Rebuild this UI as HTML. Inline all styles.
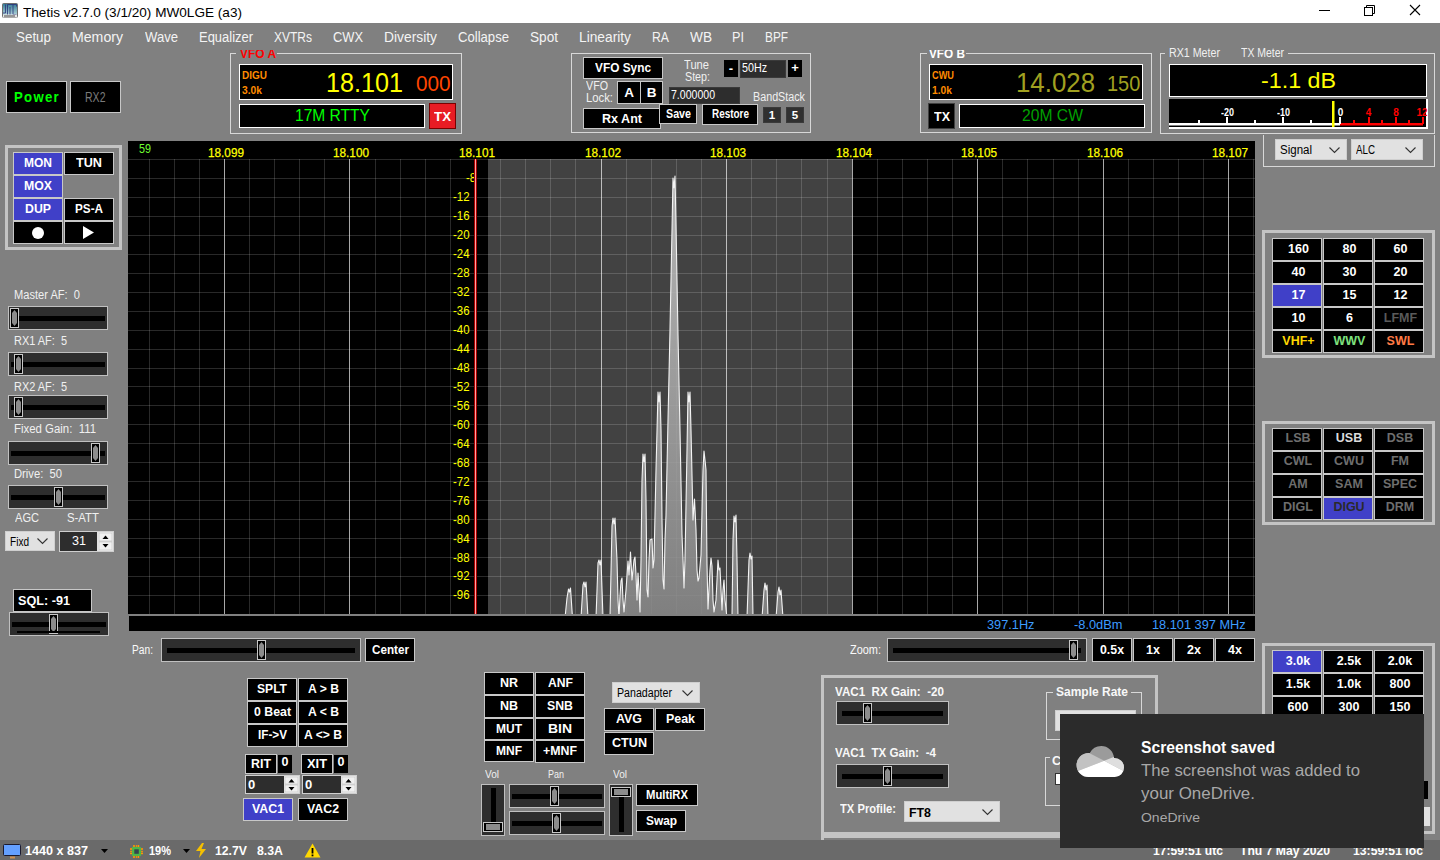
<!DOCTYPE html>
<html><head><meta charset="utf-8"><style>
html,body{margin:0;padding:0;}
body{width:1440px;height:860px;overflow:hidden;position:relative;background:#808080;font-family:"Liberation Sans",sans-serif;}
.a{position:absolute;}
.t{position:absolute;white-space:pre;}
svg{display:block;}
</style></head><body>
<div class="a" style="left:0px;top:0px;width:1440px;height:23px;background:#ffffff;"></div>
<svg class="a" style="left:2px;top:3px" width="16" height="15"><defs><linearGradient id="ig" x1="0" y1="0" x2="0" y2="1"><stop offset="0" stop-color="#2f7891"/><stop offset="1" stop-color="#cfe9ea"/></linearGradient></defs><rect x="0.5" y="0.5" width="15" height="14" rx="1" fill="url(#ig)" stroke="#6e6e6e"/><path d="M3.5 1.5v8.5h-2.5M5.5 1.5h9v2M8 4v9M11 1.5v10h3.5M5.5 1.5v12h-4.5" stroke="#2a2f7a" stroke-width="1" fill="none" opacity="0.8"/><rect x="1" y="11.5" width="14" height="3" fill="#e8e8e8"/><rect x="2" y="12.5" width="11" height="1" fill="#444"/></svg>
<div class="t" style="left:23.00px;top:6.00px;font-size:13px;line-height:13px;color:#000;font-weight:normal;transform:scaleX(1.0452);transform-origin:0 0;">Thetis v2.7.0 (3/1/20) MW0LGE (a3)</div>
<svg class="a" style="left:1310px;top:0px" width="130" height="23"><line x1="9" y1="10.5" x2="20" y2="10.5" stroke="#000" stroke-width="1"/><rect x="54.5" y="7.5" width="8" height="8" fill="none" stroke="#000"/><path d="M56.5 7.5V5.5h8v8h-2" fill="none" stroke="#000"/><path d="M100 5l10 10M110 5l-10 10" stroke="#000" stroke-width="1.1"/></svg>
<div class="t" style="left:16.00px;top:29.65px;font-size:14px;line-height:14px;color:#f4f4f4;font-weight:normal;transform:scaleX(0.9566);transform-origin:0 0;">Setup</div>
<div class="t" style="left:72.00px;top:29.65px;font-size:14px;line-height:14px;color:#f4f4f4;font-weight:normal;transform:scaleX(1.0087);transform-origin:0 0;">Memory</div>
<div class="t" style="left:145.00px;top:29.65px;font-size:14px;line-height:14px;color:#f4f4f4;font-weight:normal;transform:scaleX(0.9357);transform-origin:0 0;">Wave</div>
<div class="t" style="left:199.00px;top:29.65px;font-size:14px;line-height:14px;color:#f4f4f4;font-weight:normal;transform:scaleX(0.9252);transform-origin:0 0;">Equalizer</div>
<div class="t" style="left:274.00px;top:29.65px;font-size:14px;line-height:14px;color:#f4f4f4;font-weight:normal;transform:scaleX(0.8570);transform-origin:0 0;">XVTRs</div>
<div class="t" style="left:333.00px;top:29.65px;font-size:14px;line-height:14px;color:#f4f4f4;font-weight:normal;transform:scaleX(0.9185);transform-origin:0 0;">CWX</div>
<div class="t" style="left:384.00px;top:29.65px;font-size:14px;line-height:14px;color:#f4f4f4;font-weight:normal;transform:scaleX(0.9875);transform-origin:0 0;">Diversity</div>
<div class="t" style="left:458.00px;top:29.65px;font-size:14px;line-height:14px;color:#f4f4f4;font-weight:normal;transform:scaleX(0.9362);transform-origin:0 0;">Collapse</div>
<div class="t" style="left:530.00px;top:29.65px;font-size:14px;line-height:14px;color:#f4f4f4;font-weight:normal;transform:scaleX(0.9722);transform-origin:0 0;">Spot</div>
<div class="t" style="left:579.00px;top:29.65px;font-size:14px;line-height:14px;color:#f4f4f4;font-weight:normal;transform:scaleX(0.9826);transform-origin:0 0;">Linearity</div>
<div class="t" style="left:652.00px;top:29.65px;font-size:14px;line-height:14px;color:#f4f4f4;font-weight:normal;transform:scaleX(0.8741);transform-origin:0 0;">RA</div>
<div class="t" style="left:690.00px;top:29.65px;font-size:14px;line-height:14px;color:#f4f4f4;font-weight:normal;transform:scaleX(0.9755);transform-origin:0 0;">WB</div>
<div class="t" style="left:732.00px;top:29.65px;font-size:14px;line-height:14px;color:#f4f4f4;font-weight:normal;transform:scaleX(0.9072);transform-origin:0 0;">PI</div>
<div class="t" style="left:765.00px;top:29.65px;font-size:14px;line-height:14px;color:#f4f4f4;font-weight:normal;transform:scaleX(0.8447);transform-origin:0 0;">BPF</div>
<div class="a" style="left:6px;top:81px;width:61px;height:32px;background:#000;border:1px solid #c8c8c8;box-sizing:border-box;"></div>
<div class="t" style="left:13.65px;top:89.38px;font-size:15.5px;line-height:15.5px;color:#00ff00;font-weight:bold;letter-spacing:1.5px;transform:scaleX(0.8512);transform-origin:0 0;">Power</div>
<div class="a" style="left:70px;top:81px;width:51px;height:32px;background:#000;border:1px solid #c8c8c8;box-sizing:border-box;"></div>
<div class="t" style="left:85.25px;top:89.98px;font-size:14.2px;line-height:14.2px;color:#7a7a7a;font-weight:normal;transform:scaleX(0.7421);transform-origin:0 0;">RX2</div>
<div class="a" style="left:230px;top:53px;width:232px;height:81px;border:1px solid #d8d8d8;box-sizing:border-box;"></div>
<div class="a" style="left:236px;top:48px;width:41px;height:10px;background:#808080;"></div>
<div class="t" style="left:239.50px;top:47.00px;font-size:13px;line-height:13px;color:#ff0000;font-weight:bold;transform:scaleX(0.9174);transform-origin:0 0;">VFO A</div>
<div class="a" style="left:236px;top:44px;width:45px;height:6px;background:#808080;"></div>
<div class="a" style="left:239px;top:64px;width:214px;height:36px;background:#000;border:1px solid #ffffff;box-sizing:border-box;"></div>
<div class="t" style="left:242.00px;top:69.61px;font-size:10.5px;line-height:10.5px;color:#ff8c00;font-weight:bold;transform:scaleX(0.9524);transform-origin:0 0;">DIGU</div>
<div class="t" style="left:242.00px;top:85.11px;font-size:10.5px;line-height:10.5px;color:#ff8c00;font-weight:bold;transform:scaleX(0.9786);transform-origin:0 0;">3.0k</div>
<div class="t" style="left:325.50px;top:68.72px;font-size:27.5px;line-height:27.5px;color:#ffff00;font-weight:normal;transform:scaleX(0.9154);transform-origin:0 0;">18.101</div>
<div class="t" style="left:416.00px;top:72.95px;font-size:22.5px;line-height:22.5px;color:#ff4500;font-weight:normal;transform:scaleX(0.9216);transform-origin:0 0;">000</div>
<div class="a" style="left:239px;top:104px;width:186px;height:24px;background:#000;border:1px solid #ffffff;box-sizing:border-box;"></div>
<div class="t" style="left:294.50px;top:107.96px;font-size:16px;line-height:16px;color:#00ff00;font-weight:normal;transform:scaleX(0.9733);transform-origin:0 0;">17M RTTY</div>
<div class="a" style="left:429px;top:103px;width:27px;height:26px;background:#e81c24;border:1px solid #7a0000;box-sizing:border-box;"></div>
<div class="a" style="left:430px;top:104px;width:25px;height:24px;background:#e81c24;"></div>
<div class="t" style="left:434.00px;top:110.00px;font-size:13px;line-height:13px;color:#fff;font-weight:bold;transform:scaleX(1.0233);transform-origin:0 0;">TX</div>
<div class="a" style="left:571px;top:53px;width:240px;height:80px;border:1px solid #d8d8d8;box-sizing:border-box;"></div>
<div class="a" style="left:583px;top:57px;width:80px;height:22px;background:#000;border:1px solid #c8c8c8;box-sizing:border-box;"></div>
<div class="t" style="left:595.00px;top:61.22px;font-size:13.5px;line-height:13.5px;color:#fff;font-weight:bold;transform:scaleX(0.8781);transform-origin:0 0;">VFO Sync</div>
<div class="t" style="left:586.00px;top:80.42px;font-size:12.5px;line-height:12.5px;color:#f0f0f0;font-weight:normal;transform:scaleX(0.8562);transform-origin:0 0;">VFO</div>
<div class="t" style="left:586.00px;top:92.42px;font-size:12.5px;line-height:12.5px;color:#f0f0f0;font-weight:normal;transform:scaleX(0.9037);transform-origin:0 0;">Lock:</div>
<div class="a" style="left:617px;top:81px;width:24px;height:23px;background:#000;border:1px solid #c8c8c8;box-sizing:border-box;"></div>
<div class="t" style="left:624.13px;top:85.72px;font-size:13.5px;line-height:13.5px;color:#fff;font-weight:bold;">A</div>
<div class="a" style="left:640px;top:81px;width:23px;height:23px;background:#000;border:1px solid #c8c8c8;box-sizing:border-box;"></div>
<div class="t" style="left:646.63px;top:85.72px;font-size:13.5px;line-height:13.5px;color:#fff;font-weight:bold;">B</div>
<div class="a" style="left:583px;top:108px;width:78px;height:21px;background:#000;border:1px solid #c8c8c8;box-sizing:border-box;"></div>
<div class="t" style="left:602.00px;top:111.72px;font-size:13.5px;line-height:13.5px;color:#fff;font-weight:bold;transform:scaleX(0.9302);transform-origin:0 0;">Rx Ant</div>
<div class="a" style="left:659px;top:104px;width:38px;height:20px;background:#000;border:1px solid #c8c8c8;box-sizing:border-box;"></div>
<div class="t" style="left:665.50px;top:107.97px;font-size:12px;line-height:12px;color:#fff;font-weight:bold;transform:scaleX(0.8920);transform-origin:0 0;">Save</div>
<div class="a" style="left:702px;top:104px;width:56px;height:21px;background:#000;border:1px solid #c8c8c8;box-sizing:border-box;"></div>
<div class="t" style="left:711.50px;top:108.47px;font-size:12px;line-height:12px;color:#fff;font-weight:bold;transform:scaleX(0.8280);transform-origin:0 0;">Restore</div>
<div class="t" style="left:684.00px;top:59.42px;font-size:12.5px;line-height:12.5px;color:#f0f0f0;font-weight:normal;transform:scaleX(0.8920);transform-origin:0 0;">Tune</div>
<div class="t" style="left:685.00px;top:71.42px;font-size:12.5px;line-height:12.5px;color:#f0f0f0;font-weight:normal;transform:scaleX(0.8565);transform-origin:0 0;">Step:</div>
<div class="a" style="left:724px;top:60px;width:14px;height:17px;background:#000;"></div>
<div class="t" style="left:728.84px;top:62.00px;font-size:13px;line-height:13px;color:#fff;font-weight:bold;">-</div>
<div class="a" style="left:740px;top:60px;width:46px;height:18px;background:#2d2d2d;border:1px solid #3a3a3a;box-sizing:border-box;"></div>
<div class="t" style="left:741.50px;top:62.42px;font-size:12.5px;line-height:12.5px;color:#fff;font-weight:normal;transform:scaleX(0.8567);transform-origin:0 0;">50Hz</div>
<div class="a" style="left:788px;top:60px;width:14px;height:17px;background:#000;"></div>
<div class="t" style="left:791.20px;top:61.00px;font-size:13px;line-height:13px;color:#fff;font-weight:bold;">+</div>
<div class="a" style="left:669px;top:87px;width:71px;height:17px;background:#2d2d2d;border:1px solid #3a3a3a;box-sizing:border-box;"></div>
<div class="t" style="left:671.00px;top:89.42px;font-size:12.5px;line-height:12.5px;color:#fff;font-weight:normal;transform:scaleX(0.8439);transform-origin:0 0;">7.000000</div>
<div class="t" style="left:753.00px;top:91.42px;font-size:12.5px;line-height:12.5px;color:#f0f0f0;font-weight:normal;transform:scaleX(0.8601);transform-origin:0 0;">BandStack</div>
<div class="a" style="left:763px;top:107px;width:18px;height:16px;background:#303030;border:1px solid #3a3a3a;box-sizing:border-box;"></div>
<div class="t" style="left:768.80px;top:109.77px;font-size:11.5px;line-height:11.5px;color:#fff;font-weight:bold;">1</div>
<div class="a" style="left:786px;top:107px;width:18px;height:16px;background:#303030;border:1px solid #3a3a3a;box-sizing:border-box;"></div>
<div class="t" style="left:791.80px;top:109.77px;font-size:11.5px;line-height:11.5px;color:#fff;font-weight:bold;">5</div>
<div class="a" style="left:920px;top:53px;width:232px;height:80px;border:1px solid #d8d8d8;box-sizing:border-box;"></div>
<div class="a" style="left:927px;top:48px;width:39px;height:10px;background:#808080;"></div>
<div class="t" style="left:929.00px;top:47.00px;font-size:13px;line-height:13px;color:#ffffff;font-weight:bold;transform:scaleX(0.9062);transform-origin:0 0;">VFO B</div>
<div class="a" style="left:926px;top:44px;width:45px;height:6px;background:#808080;"></div>
<div class="a" style="left:929px;top:64px;width:214px;height:36px;background:#000;border:1px solid #ffffff;box-sizing:border-box;"></div>
<div class="t" style="left:932.00px;top:69.61px;font-size:10.5px;line-height:10.5px;color:#ff8c00;font-weight:bold;transform:scaleX(0.8773);transform-origin:0 0;">CWU</div>
<div class="t" style="left:932.00px;top:85.11px;font-size:10.5px;line-height:10.5px;color:#ff8c00;font-weight:bold;transform:scaleX(0.9786);transform-origin:0 0;">1.0k</div>
<div class="t" style="left:1015.80px;top:68.72px;font-size:27.5px;line-height:27.5px;color:#a0a020;font-weight:normal;transform:scaleX(0.9392);transform-origin:0 0;">14.028</div>
<div class="t" style="left:1106.70px;top:72.95px;font-size:22.5px;line-height:22.5px;color:#a0a020;font-weight:normal;transform:scaleX(0.8870);transform-origin:0 0;">150</div>
<div class="a" style="left:928px;top:103px;width:27px;height:26px;background:#000;border:1px solid #404040;box-sizing:border-box;"></div>
<div class="t" style="left:933.50px;top:110.00px;font-size:13px;line-height:13px;color:#fff;font-weight:bold;transform:scaleX(0.9631);transform-origin:0 0;">TX</div>
<div class="a" style="left:959px;top:104px;width:186px;height:24px;background:#000;border:1px solid #ffffff;box-sizing:border-box;"></div>
<div class="t" style="left:1021.50px;top:107.96px;font-size:16px;line-height:16px;color:#00a000;font-weight:normal;transform:scaleX(0.9803);transform-origin:0 0;">20M CW</div>
<div class="a" style="left:1160px;top:53px;width:275px;height:81px;border:1px solid #d8d8d8;box-sizing:border-box;"></div>
<div class="a" style="left:1165px;top:47px;width:123px;height:10px;background:#808080;"></div>
<div class="t" style="left:1169.00px;top:47.42px;font-size:12.5px;line-height:12.5px;color:#f0f0f0;font-weight:normal;transform:scaleX(0.8537);transform-origin:0 0;">RX1 Meter</div>
<div class="t" style="left:1241.00px;top:47.42px;font-size:12.5px;line-height:12.5px;color:#f0f0f0;font-weight:normal;transform:scaleX(0.8366);transform-origin:0 0;">TX Meter</div>
<div class="a" style="left:1169px;top:64px;width:258px;height:33px;background:#000;border:1px solid #ffffff;box-sizing:border-box;"></div>
<div class="t" style="left:1260.50px;top:69.88px;font-size:22px;line-height:22px;color:#ffff00;font-weight:normal;transform:scaleX(1.0573);transform-origin:0 0;">-1.1 dB</div>
<div class="a" style="left:1169px;top:99px;width:259px;height:29px;background:#000;"></div>
<div class="a" style="left:1426px;top:99px;width:2px;height:29px;background:#fff"></div>
<div class="a" style="left:1169px;top:127px;width:259px;height:2px;background:#ffffff"></div>
<svg class="a" style="left:1169px;top:99px" width="259" height="29"><rect x="0" y="24" width="171" height="2.5" fill="#fff"/><rect x="171" y="24" width="83" height="2.5" fill="#ff0000"/><rect x="29" y="21" width="2" height="4" fill="#fff"/><rect x="85" y="21" width="2" height="4" fill="#fff"/><rect x="141" y="21" width="2" height="4" fill="#fff"/><rect x="57" y="18" width="2" height="7" fill="#fff"/><rect x="113" y="18" width="2" height="7" fill="#fff"/><rect x="170" y="18" width="2" height="7" fill="#fff"/><rect x="184" y="21" width="2" height="4" fill="#ff0000"/><rect x="212" y="21" width="2" height="4" fill="#ff0000"/><rect x="239" y="21" width="2" height="4" fill="#ff0000"/><rect x="199" y="18" width="2" height="7" fill="#ff0000"/><rect x="226" y="18" width="2" height="7" fill="#ff0000"/><rect x="253" y="18" width="2" height="7" fill="#ff0000"/><rect x="163" y="2" width="2.5" height="26" fill="#ffff00"/></svg>
<div class="t" style="left:1220.50px;top:107.53px;font-size:10px;line-height:10px;color:#fff;font-weight:bold;transform:scaleX(0.8994);transform-origin:0 0;">-20</div>
<div class="t" style="left:1276.50px;top:107.53px;font-size:10px;line-height:10px;color:#fff;font-weight:bold;transform:scaleX(0.8994);transform-origin:0 0;">-10</div>
<div class="t" style="left:1337.72px;top:107.53px;font-size:10px;line-height:10px;color:#fff;font-weight:bold;">0</div>
<div class="t" style="left:1365.72px;top:107.53px;font-size:10px;line-height:10px;color:#ff0000;font-weight:bold;">4</div>
<div class="t" style="left:1393.22px;top:107.53px;font-size:10px;line-height:10px;color:#ff0000;font-weight:bold;">8</div>
<div class="t" style="left:1416.44px;top:107.53px;font-size:10px;line-height:10px;color:#ff0000;font-weight:bold;">12</div>
<div class="a" style="left:5px;top:145px;width:117px;height:105px;border:3px solid #c4c4c4;box-sizing:border-box;"></div>
<div class="a" style="left:13px;top:152px;width:50px;height:23px;background:#4040c8;border:1px solid #c8c8c8;box-sizing:border-box;"></div>
<div class="t" style="left:24.00px;top:157.22px;font-size:12.5px;line-height:12.5px;color:#fff;font-weight:bold;transform:scaleX(0.9601);transform-origin:0 0;">MON</div>
<div class="a" style="left:64px;top:152px;width:50px;height:23px;background:#000;border:1px solid #c8c8c8;box-sizing:border-box;"></div>
<div class="t" style="left:76.00px;top:157.22px;font-size:12.5px;line-height:12.5px;color:#fff;font-weight:bold;transform:scaleX(1.0121);transform-origin:0 0;">TUN</div>
<div class="a" style="left:13px;top:175px;width:50px;height:23px;background:#4040c8;border:1px solid #c8c8c8;box-sizing:border-box;"></div>
<div class="t" style="left:24.00px;top:180.22px;font-size:12.5px;line-height:12.5px;color:#fff;font-weight:bold;transform:scaleX(0.9834);transform-origin:0 0;">MOX</div>
<div class="a" style="left:13px;top:198px;width:50px;height:23px;background:#4040c8;border:1px solid #c8c8c8;box-sizing:border-box;"></div>
<div class="t" style="left:25.00px;top:203.22px;font-size:12.5px;line-height:12.5px;color:#fff;font-weight:bold;transform:scaleX(0.9851);transform-origin:0 0;">DUP</div>
<div class="a" style="left:64px;top:198px;width:50px;height:23px;background:#000;border:1px solid #c8c8c8;box-sizing:border-box;"></div>
<div class="t" style="left:75.00px;top:203.22px;font-size:12.5px;line-height:12.5px;color:#fff;font-weight:bold;transform:scaleX(0.9375);transform-origin:0 0;">PS-A</div>
<div class="a" style="left:13px;top:221px;width:50px;height:23px;background:#000;border:1px solid #c8c8c8;box-sizing:border-box;"></div>
<div class="a" style="left:32px;top:227px;width:12px;height:12px;border-radius:50%;background:#fff"></div>
<div class="a" style="left:64px;top:221px;width:50px;height:23px;background:#000;border:1px solid #c8c8c8;box-sizing:border-box;"></div>
<svg class="a" style="left:83px;top:226px" width="11" height="13"><polygon points="0,0 11,6.5 0,13" fill="#fff"/></svg>
<div class="t" style="left:14.00px;top:288.84px;font-size:12px;line-height:12px;color:#f0f0f0;font-weight:normal;transform:scaleX(0.9249);transform-origin:0 0;">Master AF:  0</div>
<div class="a" style="left:8px;top:306px;width:100px;height:24px;background:#2e2e2e;border:1px solid #c0c0c0;box-sizing:border-box;"></div>
<div class="a" style="left:11px;top:316px;width:94px;height:5px;background:#000;"></div>
<div class="a" style="left:10px;top:308px;width:9px;height:20px;background:#000;border:1px solid #c8c8c8;box-sizing:border-box;"></div>
<svg class="a" style="left:12px;top:310px" width="5" height="16"><polygon points="2.5,0 5,3 5,13 2.5,16 0,13 0,3" fill="#8c8c8c"/></svg>
<div class="t" style="left:14.00px;top:334.84px;font-size:12px;line-height:12px;color:#f0f0f0;font-weight:normal;transform:scaleX(0.9134);transform-origin:0 0;">RX1 AF:  5</div>
<div class="a" style="left:8px;top:352px;width:100px;height:24px;background:#2e2e2e;border:1px solid #c0c0c0;box-sizing:border-box;"></div>
<div class="a" style="left:11px;top:362px;width:94px;height:5px;background:#000;"></div>
<div class="a" style="left:14px;top:354px;width:9px;height:20px;background:#000;border:1px solid #c8c8c8;box-sizing:border-box;"></div>
<svg class="a" style="left:16px;top:356px" width="5" height="16"><polygon points="2.5,0 5,3 5,13 2.5,16 0,13 0,3" fill="#8c8c8c"/></svg>
<div class="t" style="left:14.00px;top:380.84px;font-size:12px;line-height:12px;color:#f0f0f0;font-weight:normal;transform:scaleX(0.9134);transform-origin:0 0;">RX2 AF:  5</div>
<div class="a" style="left:8px;top:395px;width:100px;height:24px;background:#2e2e2e;border:1px solid #c0c0c0;box-sizing:border-box;"></div>
<div class="a" style="left:11px;top:405px;width:94px;height:5px;background:#000;"></div>
<div class="a" style="left:14px;top:397px;width:9px;height:20px;background:#000;border:1px solid #c8c8c8;box-sizing:border-box;"></div>
<svg class="a" style="left:16px;top:399px" width="5" height="16"><polygon points="2.5,0 5,3 5,13 2.5,16 0,13 0,3" fill="#8c8c8c"/></svg>
<div class="t" style="left:14.00px;top:423.34px;font-size:12px;line-height:12px;color:#f0f0f0;font-weight:normal;transform:scaleX(0.9505);transform-origin:0 0;">Fixed Gain:  111</div>
<div class="a" style="left:8px;top:441px;width:100px;height:24px;background:#2e2e2e;border:1px solid #c0c0c0;box-sizing:border-box;"></div>
<div class="a" style="left:11px;top:451px;width:94px;height:5px;background:#000;"></div>
<div class="a" style="left:91px;top:443px;width:9px;height:20px;background:#000;border:1px solid #c8c8c8;box-sizing:border-box;"></div>
<svg class="a" style="left:93px;top:445px" width="5" height="16"><polygon points="2.5,0 5,3 5,13 2.5,16 0,13 0,3" fill="#8c8c8c"/></svg>
<div class="t" style="left:14.00px;top:467.54px;font-size:12px;line-height:12px;color:#f0f0f0;font-weight:normal;transform:scaleX(0.9347);transform-origin:0 0;">Drive:  50</div>
<div class="a" style="left:8px;top:485px;width:100px;height:24px;background:#2e2e2e;border:1px solid #c0c0c0;box-sizing:border-box;"></div>
<div class="a" style="left:11px;top:495px;width:94px;height:5px;background:#000;"></div>
<div class="a" style="left:54px;top:487px;width:9px;height:20px;background:#000;border:1px solid #c8c8c8;box-sizing:border-box;"></div>
<svg class="a" style="left:56px;top:489px" width="5" height="16"><polygon points="2.5,0 5,3 5,13 2.5,16 0,13 0,3" fill="#8c8c8c"/></svg>
<div class="t" style="left:15.00px;top:511.92px;font-size:12.5px;line-height:12.5px;color:#f0f0f0;font-weight:normal;transform:scaleX(0.8860);transform-origin:0 0;">AGC</div>
<div class="t" style="left:67.00px;top:511.92px;font-size:12.5px;line-height:12.5px;color:#f0f0f0;font-weight:normal;transform:scaleX(0.9095);transform-origin:0 0;">S-ATT</div>
<div class="a" style="left:5px;top:531px;width:50px;height:20px;background:#e1e1e1;border:1px solid #cfcfcf;box-sizing:border-box;"></div>
<div class="t" style="left:10.00px;top:535.77px;font-size:12px;line-height:12px;color:#000;font-weight:normal;transform:scaleX(0.8381);transform-origin:0 0;">Fixd</div>
<svg class="a" style="left:37px;top:538.0px" width="11" height="7"><polyline points="0.5,0.5 5.5,5.5 10.5,0.5" fill="none" stroke="#333" stroke-width="1.1"/></svg>
<div class="a" style="left:59px;top:531px;width:55px;height:21px;background:#e1e1e1;border:1px solid #cfcfcf;box-sizing:border-box;"></div>
<div class="a" style="left:60px;top:532px;width:37px;height:19px;background:#2d2d2d;"></div>
<div class="t" style="left:71.50px;top:535.42px;font-size:12.5px;line-height:12.5px;color:#fff;font-weight:normal;transform:scaleX(1.0069);transform-origin:0 0;">31</div>
<svg class="a" style="left:99px;top:533px" width="13" height="17"><rect x="0" y="0" width="13" height="8" fill="#f0f0f0" stroke="#bbb" stroke-width="0.5"/><rect x="0" y="9" width="13" height="8" fill="#f0f0f0" stroke="#bbb" stroke-width="0.5"/><polygon points="3.5,6 6.5,2.5 9.5,6" fill="#000"/><polygon points="3.5,11 9.5,11 6.5,14.5" fill="#000"/></svg>
<div class="a" style="left:13px;top:589px;width:79px;height:23px;background:#000;border:1px solid #c8c8c8;box-sizing:border-box;"></div>
<div class="t" style="left:18.00px;top:593.50px;font-size:13px;line-height:13px;color:#fff;font-weight:bold;transform:scaleX(0.9728);transform-origin:0 0;">SQL: -91</div>
<div class="a" style="left:9px;top:612px;width:100px;height:24px;background:#2e2e2e;border:1px solid #c0c0c0;box-sizing:border-box;"></div>
<div class="a" style="left:12px;top:622px;width:94px;height:5px;background:#000;"></div>
<div class="a" style="left:49px;top:614px;width:9px;height:20px;background:#000;border:1px solid #c8c8c8;box-sizing:border-box;"></div>
<svg class="a" style="left:51px;top:616px" width="5" height="16"><polygon points="2.5,0 5,3 5,13 2.5,16 0,13 0,3" fill="#8c8c8c"/></svg>
<div class="a" style="left:17px;top:631px;width:83px;height:2px;background:#000;"></div>
<svg class="a" style="left:128px;top:141px" width="1127" height="473" shape-rendering="crispEdges"><rect x="0" y="0" width="1127" height="473" fill="#000"/><rect x="360" y="18" width="364" height="455" fill="#424242"/><rect x="0" y="18" width="1127" height="1" fill="#fff" fill-opacity="0.16"/><rect x="0" y="37" width="1127" height="1" fill="#fff" fill-opacity="0.16"/><rect x="0" y="56" width="1127" height="1" fill="#fff" fill-opacity="0.16"/><rect x="0" y="75" width="1127" height="1" fill="#fff" fill-opacity="0.16"/><rect x="0" y="94" width="1127" height="1" fill="#fff" fill-opacity="0.16"/><rect x="0" y="113" width="1127" height="1" fill="#fff" fill-opacity="0.16"/><rect x="0" y="132" width="1127" height="1" fill="#fff" fill-opacity="0.16"/><rect x="0" y="151" width="1127" height="1" fill="#fff" fill-opacity="0.16"/><rect x="0" y="170" width="1127" height="1" fill="#fff" fill-opacity="0.16"/><rect x="0" y="189" width="1127" height="1" fill="#fff" fill-opacity="0.16"/><rect x="0" y="208" width="1127" height="1" fill="#fff" fill-opacity="0.16"/><rect x="0" y="227" width="1127" height="1" fill="#fff" fill-opacity="0.16"/><rect x="0" y="245" width="1127" height="1" fill="#fff" fill-opacity="0.16"/><rect x="0" y="264" width="1127" height="1" fill="#fff" fill-opacity="0.16"/><rect x="0" y="283" width="1127" height="1" fill="#fff" fill-opacity="0.16"/><rect x="0" y="302" width="1127" height="1" fill="#fff" fill-opacity="0.16"/><rect x="0" y="321" width="1127" height="1" fill="#fff" fill-opacity="0.16"/><rect x="0" y="340" width="1127" height="1" fill="#fff" fill-opacity="0.16"/><rect x="0" y="359" width="1127" height="1" fill="#fff" fill-opacity="0.16"/><rect x="0" y="378" width="1127" height="1" fill="#fff" fill-opacity="0.16"/><rect x="0" y="397" width="1127" height="1" fill="#fff" fill-opacity="0.16"/><rect x="0" y="416" width="1127" height="1" fill="#fff" fill-opacity="0.16"/><rect x="0" y="435" width="1127" height="1" fill="#fff" fill-opacity="0.16"/><rect x="0" y="454" width="1127" height="1" fill="#fff" fill-opacity="0.16"/><rect x="21" y="18" width="1" height="455" fill="#fff" fill-opacity="0.16"/><rect x="46" y="18" width="1" height="455" fill="#fff" fill-opacity="0.16"/><rect x="71" y="18" width="1" height="455" fill="#fff" fill-opacity="0.16"/><rect x="96" y="18" width="1" height="455" fill="#fff" fill-opacity="0.66"/><rect x="121" y="18" width="1" height="455" fill="#fff" fill-opacity="0.16"/><rect x="146" y="18" width="1" height="455" fill="#fff" fill-opacity="0.16"/><rect x="171" y="18" width="1" height="455" fill="#fff" fill-opacity="0.16"/><rect x="196" y="18" width="1" height="455" fill="#fff" fill-opacity="0.16"/><rect x="221" y="18" width="1" height="455" fill="#fff" fill-opacity="0.66"/><rect x="247" y="18" width="1" height="455" fill="#fff" fill-opacity="0.16"/><rect x="272" y="18" width="1" height="455" fill="#fff" fill-opacity="0.16"/><rect x="297" y="18" width="1" height="455" fill="#fff" fill-opacity="0.16"/><rect x="322" y="18" width="1" height="455" fill="#fff" fill-opacity="0.16"/><rect x="347" y="18" width="1" height="455" fill="#fff" fill-opacity="0.66"/><rect x="372" y="18" width="1" height="455" fill="#fff" fill-opacity="0.16"/><rect x="397" y="18" width="1" height="455" fill="#fff" fill-opacity="0.16"/><rect x="422" y="18" width="1" height="455" fill="#fff" fill-opacity="0.16"/><rect x="447" y="18" width="1" height="455" fill="#fff" fill-opacity="0.16"/><rect x="473" y="18" width="1" height="455" fill="#fff" fill-opacity="0.66"/><rect x="498" y="18" width="1" height="455" fill="#fff" fill-opacity="0.16"/><rect x="523" y="18" width="1" height="455" fill="#fff" fill-opacity="0.16"/><rect x="548" y="18" width="1" height="455" fill="#fff" fill-opacity="0.16"/><rect x="573" y="18" width="1" height="455" fill="#fff" fill-opacity="0.16"/><rect x="598" y="18" width="1" height="455" fill="#fff" fill-opacity="0.66"/><rect x="623" y="18" width="1" height="455" fill="#fff" fill-opacity="0.16"/><rect x="648" y="18" width="1" height="455" fill="#fff" fill-opacity="0.16"/><rect x="673" y="18" width="1" height="455" fill="#fff" fill-opacity="0.16"/><rect x="699" y="18" width="1" height="455" fill="#fff" fill-opacity="0.16"/><rect x="724" y="18" width="1" height="455" fill="#fff" fill-opacity="0.66"/><rect x="749" y="18" width="1" height="455" fill="#fff" fill-opacity="0.16"/><rect x="774" y="18" width="1" height="455" fill="#fff" fill-opacity="0.16"/><rect x="799" y="18" width="1" height="455" fill="#fff" fill-opacity="0.16"/><rect x="824" y="18" width="1" height="455" fill="#fff" fill-opacity="0.16"/><rect x="849" y="18" width="1" height="455" fill="#fff" fill-opacity="0.66"/><rect x="874" y="18" width="1" height="455" fill="#fff" fill-opacity="0.16"/><rect x="899" y="18" width="1" height="455" fill="#fff" fill-opacity="0.16"/><rect x="925" y="18" width="1" height="455" fill="#fff" fill-opacity="0.16"/><rect x="950" y="18" width="1" height="455" fill="#fff" fill-opacity="0.16"/><rect x="975" y="18" width="1" height="455" fill="#fff" fill-opacity="0.66"/><rect x="1000" y="18" width="1" height="455" fill="#fff" fill-opacity="0.16"/><rect x="1025" y="18" width="1" height="455" fill="#fff" fill-opacity="0.16"/><rect x="1050" y="18" width="1" height="455" fill="#fff" fill-opacity="0.16"/><rect x="1075" y="18" width="1" height="455" fill="#fff" fill-opacity="0.16"/><rect x="1100" y="18" width="1" height="455" fill="#fff" fill-opacity="0.66"/><rect x="1125" y="18" width="1" height="455" fill="#fff" fill-opacity="0.16"/></svg>
<svg class="a" style="left:128px;top:141px" width="1127" height="473"><defs><linearGradient id="sg" x1="0" y1="0" x2="0" y2="1"><stop offset="0" stop-color="#c8c8c8"/><stop offset="1" stop-color="#8a8a8a"/></linearGradient></defs><polygon points="432,477 437,477 439,457 440.5,448 441.5,451 442.5,447 444.5,477 453,477 455,444 456,441 457,446 458,441 460,477 468,477 470,422 471,419 472,424 473,419 475,477 482,477 484,385 485,377 486,383 487,377 489,419 490,459 491,477 492,455 493,440 494,437 495,459 496,471 498,449 500,420 501,434 502.5,411 504,439 506,419 507,416 508,434 509,459 510,432 511,449 512,471 513,419 514,339 515,313 516,321 517,313 518,359 519,449 520,456 521,419 522,399 524,398 525,427 526,419 528,329 530,251 531,261 532,251 533,289 534,379 535,439 536,448 537,399 538,374 540,279 542,189 544,89 545,37 546,47 547,35 548,84 550,194 552,289 554,394 555,419 556,447 557,419 559,309 560,251 561,261 562,251 563,289 565,379 566.5,358 568,389 569,429 570,440 571,437 573,414 575,329 576,310 577,319 578,329 579,424 580,468 582,429 583,417 584,425 585,459 586,471 588,459 590,419 591,429 592,427 593,449 594,469 595,449 596,439 597,459 599,477 604,477 605,399 606,375 607,381 608,374 609,419 610,477 619,477 621,419 622,412 623,418 624,415 625,477 634,477 636,449 637,442 638,449 639,444 640,477 648,477 650,451 651,446 652,454 653,449 655,477 662,477" fill="url(#sg)" fill-opacity="0.85"/><polyline points="432,477 437,477 439,457 440.5,448 441.5,451 442.5,447 444.5,477 453,477 455,444 456,441 457,446 458,441 460,477 468,477 470,422 471,419 472,424 473,419 475,477 482,477 484,385 485,377 486,383 487,377 489,419 490,459 491,477 492,455 493,440 494,437 495,459 496,471 498,449 500,420 501,434 502.5,411 504,439 506,419 507,416 508,434 509,459 510,432 511,449 512,471 513,419 514,339 515,313 516,321 517,313 518,359 519,449 520,456 521,419 522,399 524,398 525,427 526,419 528,329 530,251 531,261 532,251 533,289 534,379 535,439 536,448 537,399 538,374 540,279 542,189 544,89 545,37 546,47 547,35 548,84 550,194 552,289 554,394 555,419 556,447 557,419 559,309 560,251 561,261 562,251 563,289 565,379 566.5,358 568,389 569,429 570,440 571,437 573,414 575,329 576,310 577,319 578,329 579,424 580,468 582,429 583,417 584,425 585,459 586,471 588,459 590,419 591,429 592,427 593,449 594,469 595,449 596,439 597,459 599,477 604,477 605,399 606,375 607,381 608,374 609,419 610,477 619,477 621,419 622,412 623,418 624,415 625,477 634,477 636,449 637,442 638,449 639,444 640,477 648,477 650,451 651,446 652,454 653,449 655,477 662,477" fill="none" stroke="#f4f4f4" stroke-width="1.1" stroke-linejoin="round"/></svg>
<div class="t" style="left:207.90px;top:147.42px;font-size:12.5px;line-height:12.5px;color:#ffff00;font-weight:normal;transform:scaleX(0.9416);transform-origin:0 0;-webkit-text-stroke:0.25px #ffff00;">18.099</div>
<div class="t" style="left:333.45px;top:147.42px;font-size:12.5px;line-height:12.5px;color:#ffff00;font-weight:normal;transform:scaleX(0.9416);transform-origin:0 0;-webkit-text-stroke:0.25px #ffff00;">18.100</div>
<div class="t" style="left:459.00px;top:147.42px;font-size:12.5px;line-height:12.5px;color:#ffff00;font-weight:normal;transform:scaleX(0.9416);transform-origin:0 0;-webkit-text-stroke:0.25px #ffff00;">18.101</div>
<div class="t" style="left:584.55px;top:147.42px;font-size:12.5px;line-height:12.5px;color:#ffff00;font-weight:normal;transform:scaleX(0.9416);transform-origin:0 0;-webkit-text-stroke:0.25px #ffff00;">18.102</div>
<div class="t" style="left:710.10px;top:147.42px;font-size:12.5px;line-height:12.5px;color:#ffff00;font-weight:normal;transform:scaleX(0.9416);transform-origin:0 0;-webkit-text-stroke:0.25px #ffff00;">18.103</div>
<div class="t" style="left:835.65px;top:147.42px;font-size:12.5px;line-height:12.5px;color:#ffff00;font-weight:normal;transform:scaleX(0.9416);transform-origin:0 0;-webkit-text-stroke:0.25px #ffff00;">18.104</div>
<div class="t" style="left:961.20px;top:147.42px;font-size:12.5px;line-height:12.5px;color:#ffff00;font-weight:normal;transform:scaleX(0.9416);transform-origin:0 0;-webkit-text-stroke:0.25px #ffff00;">18.105</div>
<div class="t" style="left:1086.75px;top:147.42px;font-size:12.5px;line-height:12.5px;color:#ffff00;font-weight:normal;transform:scaleX(0.9416);transform-origin:0 0;-webkit-text-stroke:0.25px #ffff00;">18.106</div>
<div class="t" style="left:1212.30px;top:147.42px;font-size:12.5px;line-height:12.5px;color:#ffff00;font-weight:normal;transform:scaleX(0.9416);transform-origin:0 0;-webkit-text-stroke:0.25px #ffff00;">18.107</div>
<div class="t" style="left:138.80px;top:143.25px;font-size:12.7px;line-height:12.7px;color:#70ff30;font-weight:normal;transform:scaleX(0.8495);transform-origin:0 0;">59</div>
<div class="t" style="left:465.50px;top:171.68px;font-size:12.5px;line-height:12.5px;color:#ffff00;font-weight:normal;transform:scaleX(0.8997);transform-origin:0 0;">-8</div>
<div class="t" style="left:452.70px;top:191.33px;font-size:12.5px;line-height:12.5px;color:#ffff00;font-weight:normal;transform:scaleX(0.9188);transform-origin:0 0;">-12</div>
<div class="t" style="left:452.70px;top:210.29px;font-size:12.5px;line-height:12.5px;color:#ffff00;font-weight:normal;transform:scaleX(0.9188);transform-origin:0 0;">-16</div>
<div class="t" style="left:452.70px;top:229.25px;font-size:12.5px;line-height:12.5px;color:#ffff00;font-weight:normal;transform:scaleX(0.9188);transform-origin:0 0;">-20</div>
<div class="t" style="left:452.70px;top:248.20px;font-size:12.5px;line-height:12.5px;color:#ffff00;font-weight:normal;transform:scaleX(0.9188);transform-origin:0 0;">-24</div>
<div class="t" style="left:452.70px;top:267.16px;font-size:12.5px;line-height:12.5px;color:#ffff00;font-weight:normal;transform:scaleX(0.9188);transform-origin:0 0;">-28</div>
<div class="t" style="left:452.70px;top:286.12px;font-size:12.5px;line-height:12.5px;color:#ffff00;font-weight:normal;transform:scaleX(0.9188);transform-origin:0 0;">-32</div>
<div class="t" style="left:452.70px;top:305.07px;font-size:12.5px;line-height:12.5px;color:#ffff00;font-weight:normal;transform:scaleX(0.9188);transform-origin:0 0;">-36</div>
<div class="t" style="left:452.70px;top:324.03px;font-size:12.5px;line-height:12.5px;color:#ffff00;font-weight:normal;transform:scaleX(0.9188);transform-origin:0 0;">-40</div>
<div class="t" style="left:452.70px;top:342.99px;font-size:12.5px;line-height:12.5px;color:#ffff00;font-weight:normal;transform:scaleX(0.9188);transform-origin:0 0;">-44</div>
<div class="t" style="left:452.70px;top:361.95px;font-size:12.5px;line-height:12.5px;color:#ffff00;font-weight:normal;transform:scaleX(0.9188);transform-origin:0 0;">-48</div>
<div class="t" style="left:452.70px;top:380.90px;font-size:12.5px;line-height:12.5px;color:#ffff00;font-weight:normal;transform:scaleX(0.9188);transform-origin:0 0;">-52</div>
<div class="t" style="left:452.70px;top:399.86px;font-size:12.5px;line-height:12.5px;color:#ffff00;font-weight:normal;transform:scaleX(0.9188);transform-origin:0 0;">-56</div>
<div class="t" style="left:452.70px;top:418.82px;font-size:12.5px;line-height:12.5px;color:#ffff00;font-weight:normal;transform:scaleX(0.9188);transform-origin:0 0;">-60</div>
<div class="t" style="left:452.70px;top:437.77px;font-size:12.5px;line-height:12.5px;color:#ffff00;font-weight:normal;transform:scaleX(0.9188);transform-origin:0 0;">-64</div>
<div class="t" style="left:452.70px;top:456.73px;font-size:12.5px;line-height:12.5px;color:#ffff00;font-weight:normal;transform:scaleX(0.9188);transform-origin:0 0;">-68</div>
<div class="t" style="left:452.70px;top:475.69px;font-size:12.5px;line-height:12.5px;color:#ffff00;font-weight:normal;transform:scaleX(0.9188);transform-origin:0 0;">-72</div>
<div class="t" style="left:452.70px;top:494.64px;font-size:12.5px;line-height:12.5px;color:#ffff00;font-weight:normal;transform:scaleX(0.9188);transform-origin:0 0;">-76</div>
<div class="t" style="left:452.70px;top:513.60px;font-size:12.5px;line-height:12.5px;color:#ffff00;font-weight:normal;transform:scaleX(0.9188);transform-origin:0 0;">-80</div>
<div class="t" style="left:452.70px;top:532.56px;font-size:12.5px;line-height:12.5px;color:#ffff00;font-weight:normal;transform:scaleX(0.9188);transform-origin:0 0;">-84</div>
<div class="t" style="left:452.70px;top:551.52px;font-size:12.5px;line-height:12.5px;color:#ffff00;font-weight:normal;transform:scaleX(0.9188);transform-origin:0 0;">-88</div>
<div class="t" style="left:452.70px;top:570.47px;font-size:12.5px;line-height:12.5px;color:#ffff00;font-weight:normal;transform:scaleX(0.9188);transform-origin:0 0;">-92</div>
<div class="t" style="left:452.70px;top:589.43px;font-size:12.5px;line-height:12.5px;color:#ffff00;font-weight:normal;transform:scaleX(0.9188);transform-origin:0 0;">-96</div>
<div class="a" style="left:474px;top:159px;width:3px;height:455px;background:#a80000;"></div>
<div class="a" style="left:475px;top:159px;width:1px;height:455px;background:#ffa0a0;"></div>
<div class="a" style="left:129px;top:616px;width:1126px;height:15px;background:#000;"></div>
<div class="t" style="left:986.90px;top:617.70px;font-size:13px;line-height:13px;color:#3d9bff;font-weight:normal;transform:scaleX(0.9810);transform-origin:0 0;">397.1Hz</div>
<div class="t" style="left:1074.00px;top:617.70px;font-size:13px;line-height:13px;color:#3d9bff;font-weight:normal;transform:scaleX(0.9871);transform-origin:0 0;">-8.0dBm</div>
<div class="t" style="left:1151.70px;top:617.70px;font-size:13px;line-height:13px;color:#3d9bff;font-weight:normal;transform:scaleX(0.9822);transform-origin:0 0;">18.101 397 MHz</div>
<div class="a" style="left:1263px;top:135px;width:1px;height:32px;background:#d8d8d8;"></div>
<div class="a" style="left:1434px;top:135px;width:1px;height:32px;background:#d8d8d8;"></div>
<div class="a" style="left:1263px;top:166px;width:172px;height:1px;background:#d8d8d8;"></div>
<div class="a" style="left:1275px;top:139px;width:72px;height:21px;background:#e1e1e1;border:1px solid #cfcfcf;box-sizing:border-box;"></div>
<div class="t" style="left:1280.00px;top:144.02px;font-size:12.5px;line-height:12.5px;color:#000;font-weight:normal;transform:scaleX(0.9209);transform-origin:0 0;">Signal</div>
<svg class="a" style="left:1329px;top:146.5px" width="11" height="7"><polyline points="0.5,0.5 5.5,5.5 10.5,0.5" fill="none" stroke="#333" stroke-width="1.1"/></svg>
<div class="a" style="left:1351px;top:139px;width:72px;height:21px;background:#e1e1e1;border:1px solid #cfcfcf;box-sizing:border-box;"></div>
<div class="t" style="left:1356.00px;top:144.02px;font-size:12.5px;line-height:12.5px;color:#000;font-weight:normal;transform:scaleX(0.7813);transform-origin:0 0;">ALC</div>
<svg class="a" style="left:1405px;top:146.5px" width="11" height="7"><polyline points="0.5,0.5 5.5,5.5 10.5,0.5" fill="none" stroke="#333" stroke-width="1.1"/></svg>
<div class="a" style="left:1262px;top:230px;width:173px;height:128px;border:3px solid #c4c4c4;box-sizing:border-box;"></div>
<div class="a" style="left:1272px;top:238px;width:50px;height:23px;background:#000;border:1px solid #c8c8c8;box-sizing:border-box;"></div>
<div class="t" style="left:1288.07px;top:243.42px;font-size:12.5px;line-height:12.5px;color:#fff;font-weight:bold;">160</div>
<div class="a" style="left:1323px;top:238px;width:50px;height:23px;background:#000;border:1px solid #c8c8c8;box-sizing:border-box;"></div>
<div class="t" style="left:1342.55px;top:243.42px;font-size:12.5px;line-height:12.5px;color:#fff;font-weight:bold;">80</div>
<div class="a" style="left:1374px;top:238px;width:50px;height:23px;background:#000;border:1px solid #c8c8c8;box-sizing:border-box;"></div>
<div class="t" style="left:1393.55px;top:243.42px;font-size:12.5px;line-height:12.5px;color:#fff;font-weight:bold;">60</div>
<div class="a" style="left:1272px;top:261px;width:50px;height:23px;background:#000;border:1px solid #c8c8c8;box-sizing:border-box;"></div>
<div class="t" style="left:1291.55px;top:266.42px;font-size:12.5px;line-height:12.5px;color:#fff;font-weight:bold;">40</div>
<div class="a" style="left:1323px;top:261px;width:50px;height:23px;background:#000;border:1px solid #c8c8c8;box-sizing:border-box;"></div>
<div class="t" style="left:1342.55px;top:266.42px;font-size:12.5px;line-height:12.5px;color:#fff;font-weight:bold;">30</div>
<div class="a" style="left:1374px;top:261px;width:50px;height:23px;background:#000;border:1px solid #c8c8c8;box-sizing:border-box;"></div>
<div class="t" style="left:1393.55px;top:266.42px;font-size:12.5px;line-height:12.5px;color:#fff;font-weight:bold;">20</div>
<div class="a" style="left:1272px;top:284px;width:50px;height:23px;background:#4040c8;border:1px solid #c8c8c8;box-sizing:border-box;"></div>
<div class="t" style="left:1291.55px;top:289.42px;font-size:12.5px;line-height:12.5px;color:#fff;font-weight:bold;">17</div>
<div class="a" style="left:1323px;top:284px;width:50px;height:23px;background:#000;border:1px solid #c8c8c8;box-sizing:border-box;"></div>
<div class="t" style="left:1342.55px;top:289.42px;font-size:12.5px;line-height:12.5px;color:#fff;font-weight:bold;">15</div>
<div class="a" style="left:1374px;top:284px;width:50px;height:23px;background:#000;border:1px solid #c8c8c8;box-sizing:border-box;"></div>
<div class="t" style="left:1393.55px;top:289.42px;font-size:12.5px;line-height:12.5px;color:#fff;font-weight:bold;">12</div>
<div class="a" style="left:1272px;top:307px;width:50px;height:23px;background:#000;border:1px solid #c8c8c8;box-sizing:border-box;"></div>
<div class="t" style="left:1291.55px;top:312.42px;font-size:12.5px;line-height:12.5px;color:#fff;font-weight:bold;">10</div>
<div class="a" style="left:1323px;top:307px;width:50px;height:23px;background:#000;border:1px solid #c8c8c8;box-sizing:border-box;"></div>
<div class="t" style="left:1346.02px;top:312.42px;font-size:12.5px;line-height:12.5px;color:#fff;font-weight:bold;">6</div>
<div class="a" style="left:1374px;top:307px;width:50px;height:23px;background:#000;border:1px solid #c8c8c8;box-sizing:border-box;"></div>
<div class="t" style="left:1383.84px;top:312.42px;font-size:12.5px;line-height:12.5px;color:#5a5a5a;font-weight:bold;">LFMF</div>
<div class="a" style="left:1272px;top:330px;width:50px;height:23px;background:#000;border:1px solid #c8c8c8;box-sizing:border-box;"></div>
<div class="t" style="left:1282.35px;top:335.42px;font-size:12.5px;line-height:12.5px;color:#ffd700;font-weight:bold;">VHF+</div>
<div class="a" style="left:1323px;top:330px;width:50px;height:23px;background:#000;border:1px solid #c8c8c8;box-sizing:border-box;"></div>
<div class="t" style="left:1333.53px;top:335.42px;font-size:12.5px;line-height:12.5px;color:#7ee07e;font-weight:bold;">WWV</div>
<div class="a" style="left:1374px;top:330px;width:50px;height:23px;background:#000;border:1px solid #c8c8c8;box-sizing:border-box;"></div>
<div class="t" style="left:1386.61px;top:335.42px;font-size:12.5px;line-height:12.5px;color:#ff7a45;font-weight:bold;">SWL</div>
<div class="a" style="left:1262px;top:421px;width:173px;height:104px;border:3px solid #c4c4c4;box-sizing:border-box;"></div>
<div class="a" style="left:1272px;top:428px;width:50px;height:23px;background:#000;border:1px solid #c8c8c8;box-sizing:border-box;"></div>
<div class="t" style="left:1285.50px;top:432.42px;font-size:12.5px;line-height:12.5px;color:#6e6e6e;font-weight:bold;">LSB</div>
<div class="a" style="left:1323px;top:428px;width:50px;height:23px;background:#000;border:1px solid #c8c8c8;box-sizing:border-box;"></div>
<div class="t" style="left:1335.80px;top:432.42px;font-size:12.5px;line-height:12.5px;color:#dcdcdc;font-weight:bold;">USB</div>
<div class="a" style="left:1374px;top:428px;width:50px;height:23px;background:#000;border:1px solid #c8c8c8;box-sizing:border-box;"></div>
<div class="t" style="left:1386.80px;top:432.42px;font-size:12.5px;line-height:12.5px;color:#6e6e6e;font-weight:bold;">DSB</div>
<div class="a" style="left:1272px;top:451px;width:50px;height:23px;background:#000;border:1px solid #c8c8c8;box-sizing:border-box;"></div>
<div class="t" style="left:1283.77px;top:455.42px;font-size:12.5px;line-height:12.5px;color:#6e6e6e;font-weight:bold;">CWL</div>
<div class="a" style="left:1323px;top:451px;width:50px;height:23px;background:#000;border:1px solid #c8c8c8;box-sizing:border-box;"></div>
<div class="t" style="left:1334.07px;top:455.42px;font-size:12.5px;line-height:12.5px;color:#6e6e6e;font-weight:bold;">CWU</div>
<div class="a" style="left:1374px;top:451px;width:50px;height:23px;background:#000;border:1px solid #c8c8c8;box-sizing:border-box;"></div>
<div class="t" style="left:1390.98px;top:455.42px;font-size:12.5px;line-height:12.5px;color:#6e6e6e;font-weight:bold;">FM</div>
<div class="a" style="left:1272px;top:474px;width:50px;height:23px;background:#000;border:1px solid #c8c8c8;box-sizing:border-box;"></div>
<div class="t" style="left:1288.28px;top:478.42px;font-size:12.5px;line-height:12.5px;color:#6e6e6e;font-weight:bold;">AM</div>
<div class="a" style="left:1323px;top:474px;width:50px;height:23px;background:#000;border:1px solid #c8c8c8;box-sizing:border-box;"></div>
<div class="t" style="left:1335.11px;top:478.42px;font-size:12.5px;line-height:12.5px;color:#6e6e6e;font-weight:bold;">SAM</div>
<div class="a" style="left:1374px;top:474px;width:50px;height:23px;background:#000;border:1px solid #c8c8c8;box-sizing:border-box;"></div>
<div class="t" style="left:1382.98px;top:478.42px;font-size:12.5px;line-height:12.5px;color:#6e6e6e;font-weight:bold;">SPEC</div>
<div class="a" style="left:1272px;top:497px;width:50px;height:23px;background:#000;border:1px solid #c8c8c8;box-sizing:border-box;"></div>
<div class="t" style="left:1283.07px;top:501.42px;font-size:12.5px;line-height:12.5px;color:#6e6e6e;font-weight:bold;">DIGL</div>
<div class="a" style="left:1323px;top:497px;width:50px;height:23px;background:#4040c8;border:1px solid #c8c8c8;box-sizing:border-box;"></div>
<div class="t" style="left:1333.38px;top:501.42px;font-size:12.5px;line-height:12.5px;color:#2a2a2a;font-weight:bold;">DIGU</div>
<div class="a" style="left:1374px;top:497px;width:50px;height:23px;background:#000;border:1px solid #c8c8c8;box-sizing:border-box;"></div>
<div class="t" style="left:1385.77px;top:501.42px;font-size:12.5px;line-height:12.5px;color:#6e6e6e;font-weight:bold;">DRM</div>
<div class="a" style="left:1262px;top:643px;width:173px;height:191px;border:3px solid #c4c4c4;box-sizing:border-box;"></div>
<div class="a" style="left:1272px;top:650px;width:50px;height:23px;background:#4040c8;border:1px solid #c8c8c8;box-sizing:border-box;"></div>
<div class="t" style="left:1285.84px;top:655.42px;font-size:12.5px;line-height:12.5px;color:#fff;font-weight:bold;">3.0k</div>
<div class="a" style="left:1323px;top:650px;width:50px;height:23px;background:#000;border:1px solid #c8c8c8;box-sizing:border-box;"></div>
<div class="t" style="left:1336.84px;top:655.42px;font-size:12.5px;line-height:12.5px;color:#fff;font-weight:bold;">2.5k</div>
<div class="a" style="left:1374px;top:650px;width:50px;height:23px;background:#000;border:1px solid #c8c8c8;box-sizing:border-box;"></div>
<div class="t" style="left:1387.84px;top:655.42px;font-size:12.5px;line-height:12.5px;color:#fff;font-weight:bold;">2.0k</div>
<div class="a" style="left:1272px;top:673px;width:50px;height:23px;background:#000;border:1px solid #c8c8c8;box-sizing:border-box;"></div>
<div class="t" style="left:1285.84px;top:678.42px;font-size:12.5px;line-height:12.5px;color:#fff;font-weight:bold;">1.5k</div>
<div class="a" style="left:1323px;top:673px;width:50px;height:23px;background:#000;border:1px solid #c8c8c8;box-sizing:border-box;"></div>
<div class="t" style="left:1336.84px;top:678.42px;font-size:12.5px;line-height:12.5px;color:#fff;font-weight:bold;">1.0k</div>
<div class="a" style="left:1374px;top:673px;width:50px;height:23px;background:#000;border:1px solid #c8c8c8;box-sizing:border-box;"></div>
<div class="t" style="left:1389.57px;top:678.42px;font-size:12.5px;line-height:12.5px;color:#fff;font-weight:bold;">800</div>
<div class="a" style="left:1272px;top:696px;width:50px;height:23px;background:#000;border:1px solid #c8c8c8;box-sizing:border-box;"></div>
<div class="t" style="left:1287.57px;top:701.42px;font-size:12.5px;line-height:12.5px;color:#fff;font-weight:bold;">600</div>
<div class="a" style="left:1323px;top:696px;width:50px;height:23px;background:#000;border:1px solid #c8c8c8;box-sizing:border-box;"></div>
<div class="t" style="left:1338.57px;top:701.42px;font-size:12.5px;line-height:12.5px;color:#fff;font-weight:bold;">300</div>
<div class="a" style="left:1374px;top:696px;width:50px;height:23px;background:#000;border:1px solid #c8c8c8;box-sizing:border-box;"></div>
<div class="t" style="left:1389.57px;top:701.42px;font-size:12.5px;line-height:12.5px;color:#fff;font-weight:bold;">150</div>
<div class="t" style="left:131.50px;top:644.42px;font-size:12.5px;line-height:12.5px;color:#fafafa;font-weight:normal;transform:scaleX(0.8166);transform-origin:0 0;">Pan:</div>
<div class="a" style="left:161px;top:638px;width:200px;height:24px;background:#2e2e2e;border:1px solid #c0c0c0;box-sizing:border-box;"></div>
<div class="a" style="left:167px;top:648px;width:188px;height:5px;background:#000;"></div>
<div class="a" style="left:257px;top:640px;width:9px;height:20px;background:#000;border:1px solid #c8c8c8;box-sizing:border-box;"></div>
<svg class="a" style="left:259px;top:642px" width="5" height="16"><polygon points="2.5,0 5,3 5,13 2.5,16 0,13 0,3" fill="#8c8c8c"/></svg>
<div class="a" style="left:365px;top:638px;width:50px;height:24px;background:#000;border:1px solid #c8c8c8;box-sizing:border-box;"></div>
<div class="t" style="left:371.50px;top:643.72px;font-size:12.5px;line-height:12.5px;color:#fff;font-weight:bold;transform:scaleX(0.9345);transform-origin:0 0;">Center</div>
<div class="t" style="left:849.80px;top:644.42px;font-size:12.5px;line-height:12.5px;color:#fafafa;font-weight:normal;transform:scaleX(0.8751);transform-origin:0 0;">Zoom:</div>
<div class="a" style="left:887px;top:638px;width:200px;height:24px;background:#2e2e2e;border:1px solid #c0c0c0;box-sizing:border-box;"></div>
<div class="a" style="left:893px;top:648px;width:188px;height:5px;background:#000;"></div>
<div class="a" style="left:1069px;top:640px;width:9px;height:20px;background:#000;border:1px solid #c8c8c8;box-sizing:border-box;"></div>
<svg class="a" style="left:1071px;top:642px" width="5" height="16"><polygon points="2.5,0 5,3 5,13 2.5,16 0,13 0,3" fill="#8c8c8c"/></svg>
<div class="a" style="left:1092px;top:638px;width:40px;height:24px;background:#000;border:1px solid #c8c8c8;box-sizing:border-box;"></div>
<div class="t" style="left:1100.00px;top:643.72px;font-size:12.5px;line-height:12.5px;color:#fff;font-weight:bold;transform:scaleX(0.9865);transform-origin:0 0;">0.5x</div>
<div class="a" style="left:1133px;top:638px;width:40px;height:24px;background:#000;border:1px solid #c8c8c8;box-sizing:border-box;"></div>
<div class="t" style="left:1146.05px;top:643.72px;font-size:12.5px;line-height:12.5px;color:#fff;font-weight:bold;">1x</div>
<div class="a" style="left:1174px;top:638px;width:40px;height:24px;background:#000;border:1px solid #c8c8c8;box-sizing:border-box;"></div>
<div class="t" style="left:1187.05px;top:643.72px;font-size:12.5px;line-height:12.5px;color:#fff;font-weight:bold;">2x</div>
<div class="a" style="left:1215px;top:638px;width:40px;height:24px;background:#000;border:1px solid #c8c8c8;box-sizing:border-box;"></div>
<div class="t" style="left:1228.05px;top:643.72px;font-size:12.5px;line-height:12.5px;color:#fff;font-weight:bold;">4x</div>
<div class="a" style="left:247px;top:678px;width:50px;height:23px;background:#000;border:1px solid #c8c8c8;box-sizing:border-box;"></div>
<div class="t" style="left:257.00px;top:683.22px;font-size:12.5px;line-height:12.5px;color:#fff;font-weight:bold;transform:scaleX(0.9671);transform-origin:0 0;">SPLT</div>
<div class="a" style="left:298px;top:678px;width:50px;height:23px;background:#000;border:1px solid #c8c8c8;box-sizing:border-box;"></div>
<div class="t" style="left:307.50px;top:683.22px;font-size:12.5px;line-height:12.5px;color:#fff;font-weight:bold;transform:scaleX(0.9737);transform-origin:0 0;">A &gt; B</div>
<div class="a" style="left:247px;top:701px;width:50px;height:23px;background:#000;border:1px solid #c8c8c8;box-sizing:border-box;"></div>
<div class="t" style="left:253.50px;top:706.22px;font-size:12.5px;line-height:12.5px;color:#fff;font-weight:bold;transform:scaleX(0.9862);transform-origin:0 0;">0 Beat</div>
<div class="a" style="left:298px;top:701px;width:50px;height:23px;background:#000;border:1px solid #c8c8c8;box-sizing:border-box;"></div>
<div class="t" style="left:307.50px;top:706.22px;font-size:12.5px;line-height:12.5px;color:#fff;font-weight:bold;transform:scaleX(0.9737);transform-origin:0 0;">A &lt; B</div>
<div class="a" style="left:247px;top:724px;width:50px;height:23px;background:#000;border:1px solid #c8c8c8;box-sizing:border-box;"></div>
<div class="t" style="left:257.50px;top:729.22px;font-size:12.5px;line-height:12.5px;color:#fff;font-weight:bold;transform:scaleX(0.9382);transform-origin:0 0;">IF-&gt;V</div>
<div class="a" style="left:298px;top:724px;width:50px;height:23px;background:#000;border:1px solid #c8c8c8;box-sizing:border-box;"></div>
<div class="t" style="left:304.00px;top:729.22px;font-size:12.5px;line-height:12.5px;color:#fff;font-weight:bold;transform:scaleX(0.9710);transform-origin:0 0;">A &lt;&gt; B</div>
<div class="a" style="left:245px;top:754px;width:32px;height:20px;background:#000;border:1px solid #c8c8c8;box-sizing:border-box;"></div>
<div class="t" style="left:251.00px;top:757.72px;font-size:12.5px;line-height:12.5px;color:#fff;font-weight:bold;transform:scaleX(0.9933);transform-origin:0 0;">RIT</div>
<div class="a" style="left:278px;top:755px;width:14px;height:18px;background:#000;"></div>
<div class="t" style="left:281.52px;top:756.42px;font-size:12.5px;line-height:12.5px;color:#fff;font-weight:bold;">0</div>
<div class="a" style="left:301px;top:754px;width:32px;height:20px;background:#000;border:1px solid #c8c8c8;box-sizing:border-box;"></div>
<div class="t" style="left:307.00px;top:757.72px;font-size:12.5px;line-height:12.5px;color:#fff;font-weight:bold;transform:scaleX(1.0285);transform-origin:0 0;">XIT</div>
<div class="a" style="left:334px;top:755px;width:14px;height:18px;background:#000;"></div>
<div class="t" style="left:337.52px;top:756.42px;font-size:12.5px;line-height:12.5px;color:#fff;font-weight:bold;">0</div>
<div class="a" style="left:245px;top:775px;width:55px;height:19px;background:#e1e1e1;border:1px solid #cfcfcf;box-sizing:border-box;"></div>
<div class="a" style="left:246px;top:776px;width:38px;height:17px;background:#2d2d2d;"></div>
<div class="t" style="left:248.00px;top:778.00px;font-size:13px;line-height:13px;color:#fff;font-weight:bold;">0</div>
<svg class="a" style="left:285px;top:777px" width="13" height="15"><rect x="0" y="0" width="13" height="7.0" fill="#f0f0f0" stroke="#bbb" stroke-width="0.5"/><rect x="0" y="8.0" width="13" height="7.0" fill="#f0f0f0" stroke="#bbb" stroke-width="0.5"/><polygon points="3.5,5.5 6.5,2 9.5,5.5" fill="#000"/><polygon points="3.5,10 9.5,10 6.5,13.5" fill="#000"/></svg>
<div class="a" style="left:302px;top:775px;width:55px;height:19px;background:#e1e1e1;border:1px solid #cfcfcf;box-sizing:border-box;"></div>
<div class="a" style="left:303px;top:776px;width:38px;height:17px;background:#2d2d2d;"></div>
<div class="t" style="left:305.00px;top:778.00px;font-size:13px;line-height:13px;color:#fff;font-weight:bold;">0</div>
<svg class="a" style="left:342px;top:777px" width="13" height="15"><rect x="0" y="0" width="13" height="7.0" fill="#f0f0f0" stroke="#bbb" stroke-width="0.5"/><rect x="0" y="8.0" width="13" height="7.0" fill="#f0f0f0" stroke="#bbb" stroke-width="0.5"/><polygon points="3.5,5.5 6.5,2 9.5,5.5" fill="#000"/><polygon points="3.5,10 9.5,10 6.5,13.5" fill="#000"/></svg>
<div class="a" style="left:243px;top:798px;width:50px;height:23px;background:#4040c8;border:1px solid #c8c8c8;box-sizing:border-box;"></div>
<div class="t" style="left:252.00px;top:803.22px;font-size:12.5px;line-height:12.5px;color:#fff;font-weight:bold;transform:scaleX(0.9871);transform-origin:0 0;">VAC1</div>
<div class="a" style="left:298px;top:798px;width:50px;height:23px;background:#000;border:1px solid #c8c8c8;box-sizing:border-box;"></div>
<div class="t" style="left:307.00px;top:803.22px;font-size:12.5px;line-height:12.5px;color:#fff;font-weight:bold;transform:scaleX(0.9871);transform-origin:0 0;">VAC2</div>
<div class="a" style="left:484px;top:672px;width:50px;height:23px;background:#000;border:1px solid #c8c8c8;box-sizing:border-box;"></div>
<div class="t" style="left:499.97px;top:677.22px;font-size:12.5px;line-height:12.5px;color:#fff;font-weight:bold;">NR</div>
<div class="a" style="left:535px;top:672px;width:50px;height:23px;background:#000;border:1px solid #c8c8c8;box-sizing:border-box;"></div>
<div class="t" style="left:547.50px;top:677.22px;font-size:12.5px;line-height:12.5px;color:#fff;font-weight:bold;transform:scaleX(0.9731);transform-origin:0 0;">ANF</div>
<div class="a" style="left:484px;top:695px;width:50px;height:23px;background:#000;border:1px solid #c8c8c8;box-sizing:border-box;"></div>
<div class="t" style="left:499.97px;top:700.22px;font-size:12.5px;line-height:12.5px;color:#fff;font-weight:bold;">NB</div>
<div class="a" style="left:535px;top:695px;width:50px;height:23px;background:#000;border:1px solid #c8c8c8;box-sizing:border-box;"></div>
<div class="t" style="left:547.00px;top:700.22px;font-size:12.5px;line-height:12.5px;color:#fff;font-weight:bold;transform:scaleX(0.9851);transform-origin:0 0;">SNB</div>
<div class="a" style="left:484px;top:718px;width:50px;height:22px;background:#000;border:1px solid #c8c8c8;box-sizing:border-box;"></div>
<div class="t" style="left:496.00px;top:722.72px;font-size:12.5px;line-height:12.5px;color:#fff;font-weight:bold;transform:scaleX(0.9603);transform-origin:0 0;">MUT</div>
<div class="a" style="left:535px;top:718px;width:50px;height:22px;background:#000;border:1px solid #c8c8c8;box-sizing:border-box;"></div>
<div class="t" style="left:548.00px;top:722.72px;font-size:12.5px;line-height:12.5px;color:#fff;font-weight:bold;transform:scaleX(1.1149);transform-origin:0 0;">BIN</div>
<div class="a" style="left:484px;top:740px;width:50px;height:22px;background:#000;border:1px solid #c8c8c8;box-sizing:border-box;"></div>
<div class="t" style="left:496.00px;top:744.72px;font-size:12.5px;line-height:12.5px;color:#fff;font-weight:bold;transform:scaleX(0.9603);transform-origin:0 0;">MNF</div>
<div class="a" style="left:535px;top:740px;width:50px;height:23px;background:#000;border:1px solid #c8c8c8;box-sizing:border-box;"></div>
<div class="t" style="left:543.00px;top:745.22px;font-size:12.5px;line-height:12.5px;color:#fff;font-weight:bold;transform:scaleX(0.9891);transform-origin:0 0;">+MNF</div>
<div class="a" style="left:612px;top:682px;width:88px;height:21px;background:#e1e1e1;border:1px solid #cfcfcf;box-sizing:border-box;"></div>
<div class="t" style="left:617.00px;top:687.27px;font-size:12px;line-height:12px;color:#000;font-weight:normal;transform:scaleX(0.8863);transform-origin:0 0;">Panadapter</div>
<svg class="a" style="left:682px;top:689.5px" width="11" height="7"><polyline points="0.5,0.5 5.5,5.5 10.5,0.5" fill="none" stroke="#333" stroke-width="1.1"/></svg>
<div class="a" style="left:604px;top:708px;width:50px;height:23px;background:#000;border:1px solid #c8c8c8;box-sizing:border-box;"></div>
<div class="t" style="left:616.00px;top:713.22px;font-size:12.5px;line-height:12.5px;color:#fff;font-weight:bold;transform:scaleX(0.9939);transform-origin:0 0;">AVG</div>
<div class="a" style="left:655px;top:708px;width:50px;height:23px;background:#000;border:1px solid #c8c8c8;box-sizing:border-box;"></div>
<div class="t" style="left:665.50px;top:713.22px;font-size:12.5px;line-height:12.5px;color:#fff;font-weight:bold;transform:scaleX(0.9933);transform-origin:0 0;">Peak</div>
<div class="a" style="left:604px;top:732px;width:50px;height:23px;background:#000;border:1px solid #c8c8c8;box-sizing:border-box;"></div>
<div class="t" style="left:611.50px;top:737.22px;font-size:12.5px;line-height:12.5px;color:#fff;font-weight:bold;transform:scaleX(1.0081);transform-origin:0 0;">CTUN</div>
<div class="t" style="left:485.00px;top:769.74px;font-size:10px;line-height:10px;color:#f0f0f0;font-weight:normal;transform:scaleX(1.0070);transform-origin:0 0;">Vol</div>
<div class="t" style="left:548.40px;top:769.74px;font-size:10px;line-height:10px;color:#f0f0f0;font-weight:normal;transform:scaleX(0.8992);transform-origin:0 0;">Pan</div>
<div class="t" style="left:613.00px;top:769.74px;font-size:10px;line-height:10px;color:#f0f0f0;font-weight:normal;transform:scaleX(1.0070);transform-origin:0 0;">Vol</div>
<div class="a" style="left:481px;top:784px;width:24px;height:52px;background:#2e2e2e;border:1px solid #c0c0c0;box-sizing:border-box;"></div>
<div class="a" style="left:491px;top:788px;width:5px;height:44px;background:#000;"></div>
<div class="a" style="left:483px;top:822px;width:20px;height:10px;background:#000;border:1px solid #c8c8c8;box-sizing:border-box;"></div>
<div class="a" style="left:486px;top:824px;width:14px;height:6px;background:#8c8c8c;"></div>
<div class="a" style="left:509px;top:784px;width:96px;height:24px;background:#2e2e2e;border:1px solid #c0c0c0;box-sizing:border-box;"></div>
<div class="a" style="left:512px;top:794px;width:90px;height:5px;background:#000;"></div>
<div class="a" style="left:550px;top:786px;width:9px;height:20px;background:#000;border:1px solid #c8c8c8;box-sizing:border-box;"></div>
<svg class="a" style="left:552px;top:788px" width="5" height="16"><polygon points="2.5,0 5,3 5,13 2.5,16 0,13 0,3" fill="#8c8c8c"/></svg>
<div class="a" style="left:509px;top:811px;width:96px;height:24px;background:#2e2e2e;border:1px solid #c0c0c0;box-sizing:border-box;"></div>
<div class="a" style="left:512px;top:821px;width:90px;height:5px;background:#000;"></div>
<div class="a" style="left:552px;top:813px;width:9px;height:20px;background:#000;border:1px solid #c8c8c8;box-sizing:border-box;"></div>
<svg class="a" style="left:554px;top:815px" width="5" height="16"><polygon points="2.5,0 5,3 5,13 2.5,16 0,13 0,3" fill="#8c8c8c"/></svg>
<div class="a" style="left:609px;top:784px;width:24px;height:52px;background:#2e2e2e;border:1px solid #c0c0c0;box-sizing:border-box;"></div>
<div class="a" style="left:619px;top:788px;width:5px;height:44px;background:#000;"></div>
<div class="a" style="left:611px;top:787px;width:20px;height:10px;background:#000;border:1px solid #c8c8c8;box-sizing:border-box;"></div>
<div class="a" style="left:614px;top:789px;width:14px;height:6px;background:#8c8c8c;"></div>
<div class="a" style="left:636px;top:784px;width:62px;height:22px;background:#000;border:1px solid #c8c8c8;box-sizing:border-box;"></div>
<div class="t" style="left:646.00px;top:788.72px;font-size:12.5px;line-height:12.5px;color:#fff;font-weight:bold;transform:scaleX(0.9028);transform-origin:0 0;">MultiRX</div>
<div class="a" style="left:636px;top:810px;width:50px;height:22px;background:#000;border:1px solid #c8c8c8;box-sizing:border-box;"></div>
<div class="t" style="left:645.50px;top:814.72px;font-size:12.5px;line-height:12.5px;color:#fff;font-weight:bold;transform:scaleX(0.9495);transform-origin:0 0;">Swap</div>
<div class="a" style="left:821px;top:675px;width:3px;height:165px;background:#c4c4c4;"></div>
<div class="a" style="left:821px;top:675px;width:337px;height:3px;background:#c4c4c4;"></div>
<div class="a" style="left:1155px;top:675px;width:3px;height:165px;background:#c4c4c4;"></div>
<div class="a" style="left:821px;top:832px;width:337px;height:6px;background:#c4c4c4;"></div>
<div class="t" style="left:835.00px;top:685.72px;font-size:12.5px;line-height:12.5px;color:#f8f8f8;font-weight:bold;transform:scaleX(0.9304);transform-origin:0 0;">VAC1  RX Gain:  -20</div>
<div class="a" style="left:836px;top:701px;width:113px;height:24px;background:#2e2e2e;border:1px solid #c0c0c0;box-sizing:border-box;"></div>
<div class="a" style="left:842px;top:711px;width:101px;height:5px;background:#000;"></div>
<div class="a" style="left:863px;top:703px;width:9px;height:20px;background:#000;border:1px solid #c8c8c8;box-sizing:border-box;"></div>
<svg class="a" style="left:865px;top:705px" width="5" height="16"><polygon points="2.5,0 5,3 5,13 2.5,16 0,13 0,3" fill="#8c8c8c"/></svg>
<div class="t" style="left:835.00px;top:747.42px;font-size:12.5px;line-height:12.5px;color:#f8f8f8;font-weight:bold;transform:scaleX(0.9282);transform-origin:0 0;">VAC1  TX Gain:  -4</div>
<div class="a" style="left:836px;top:764px;width:113px;height:24px;background:#2e2e2e;border:1px solid #c0c0c0;box-sizing:border-box;"></div>
<div class="a" style="left:842px;top:774px;width:101px;height:5px;background:#000;"></div>
<div class="a" style="left:883px;top:766px;width:9px;height:20px;background:#000;border:1px solid #c8c8c8;box-sizing:border-box;"></div>
<svg class="a" style="left:885px;top:768px" width="5" height="16"><polygon points="2.5,0 5,3 5,13 2.5,16 0,13 0,3" fill="#8c8c8c"/></svg>
<div class="t" style="left:839.50px;top:803.12px;font-size:12.5px;line-height:12.5px;color:#f8f8f8;font-weight:bold;transform:scaleX(0.8959);transform-origin:0 0;">TX Profile:</div>
<div class="a" style="left:904px;top:801px;width:96px;height:21px;background:#e1e1e1;border:1px solid #cfcfcf;box-sizing:border-box;"></div>
<div class="t" style="left:909.00px;top:805.77px;font-size:13px;line-height:13px;color:#000;font-weight:bold;transform:scaleX(0.9519);transform-origin:0 0;">FT8</div>
<svg class="a" style="left:982px;top:808.5px" width="11" height="7"><polyline points="0.5,0.5 5.5,5.5 10.5,0.5" fill="none" stroke="#333" stroke-width="1.1"/></svg>
<div class="a" style="left:1046px;top:692px;width:96px;height:48px;border:1px solid #d8d8d8;box-sizing:border-box;"></div>
<div class="a" style="left:1052.5px;top:690px;width:78px;height:5px;background:#808080;"></div>
<div class="t" style="left:1055.50px;top:686.42px;font-size:12.5px;line-height:12.5px;color:#f8f8f8;font-weight:bold;transform:scaleX(0.9596);transform-origin:0 0;">Sample Rate</div>
<div class="a" style="left:1055px;top:710px;width:81px;height:21px;background:#e1e1e1;border:1px solid #cfcfcf;box-sizing:border-box;"></div>
<div class="a" style="left:1045px;top:757px;width:98px;height:49px;border:1px solid #d8d8d8;box-sizing:border-box;"></div>
<div class="a" style="left:1050px;top:752px;width:10px;height:10px;background:#808080;"></div>
<div class="t" style="left:1052.00px;top:755.42px;font-size:12.5px;line-height:12.5px;color:#f8f8f8;font-weight:bold;">C</div>
<div class="a" style="left:1055px;top:773px;width:8px;height:12px;background:#fff;border:1px solid #333;box-sizing:border-box;"></div>
<div class="a" style="left:1424px;top:781px;width:4px;height:18px;background:#000;"></div>
<div class="a" style="left:1424px;top:807px;width:6px;height:19px;background:#e1e1e1;"></div>
<div class="a" style="left:0px;top:840px;width:1440px;height:20px;background:#6a6a6a;"></div>
<svg class="a" style="left:3px;top:844px" width="19" height="15"><rect x="0.5" y="0.5" width="17" height="11" rx="1" fill="#64a0ff" stroke="#1a1a2e"/><rect x="7" y="12.5" width="5" height="2" fill="#d09050"/></svg>
<div class="t" style="left:25.00px;top:843.60px;font-size:13px;line-height:13px;color:#fff;font-weight:bold;transform:scaleX(0.9683);transform-origin:0 0;">1440 x 837</div>
<svg class="a" style="left:101px;top:849px" width="8" height="5"><polygon points="0,0 7,0 3.5,4" fill="#000"/></svg>
<svg class="a" style="left:130px;top:845px" width="13" height="13"><rect x="3.2" y="0" width="1.6" height="2" fill="#ff9800"/><rect x="3.2" y="11" width="1.6" height="2" fill="#ff9800"/><rect x="0" y="3.2" width="2" height="1.6" fill="#ff9800"/><rect x="11" y="3.2" width="2" height="1.6" fill="#ff9800"/><rect x="5.8" y="0" width="1" height="2" fill="#ff9800"/><rect x="5.8" y="11" width="1" height="2" fill="#ff9800"/><rect x="0" y="5.8" width="2" height="1" fill="#ff9800"/><rect x="11" y="5.8" width="2" height="1" fill="#ff9800"/><rect x="7.6" y="0" width="1.6" height="2" fill="#ff9800"/><rect x="7.6" y="11" width="1.6" height="2" fill="#ff9800"/><rect x="0" y="7.6" width="2" height="1.6" fill="#ff9800"/><rect x="11" y="7.6" width="2" height="1.6" fill="#ff9800"/><rect x="2" y="2" width="9" height="9" fill="#4cb648"/><rect x="4.3" y="4.3" width="4.5" height="4.5" fill="#34454e"/></svg>
<div class="t" style="left:149.20px;top:843.60px;font-size:13px;line-height:13px;color:#fff;font-weight:bold;transform:scaleX(0.8455);transform-origin:0 0;">19%</div>
<svg class="a" style="left:183px;top:849px" width="8" height="5"><polygon points="0,0 7,0 3.5,4" fill="#000"/></svg>
<svg class="a" style="left:196px;top:843px" width="11" height="15"><polygon points="6,0 0,8 4.5,8 3,15 10,6 5.5,6 8,0" fill="#f5c000"/></svg>
<div class="t" style="left:214.70px;top:843.60px;font-size:13px;line-height:13px;color:#fff;font-weight:bold;transform:scaleX(0.9419);transform-origin:0 0;">12.7V</div>
<div class="t" style="left:256.70px;top:843.60px;font-size:13px;line-height:13px;color:#fff;font-weight:bold;transform:scaleX(0.9468);transform-origin:0 0;">8.3A</div>
<svg class="a" style="left:304px;top:843px" width="17" height="15"><polygon points="8.5,0.5 16.5,14.5 0.5,14.5" fill="#ffd800"/><rect x="7.6" y="5" width="1.8" height="5.5" fill="#000"/><rect x="7.6" y="11.5" width="1.8" height="1.8" fill="#000"/></svg>
<div class="t" style="left:1152.50px;top:843.60px;font-size:13px;line-height:13px;color:#fff;font-weight:bold;transform:scaleX(0.9314);transform-origin:0 0;">17:59:51 utc</div>
<div class="t" style="left:1240.00px;top:843.60px;font-size:13px;line-height:13px;color:#fff;font-weight:bold;transform:scaleX(0.9365);transform-origin:0 0;">Thu 7 May 2020</div>
<div class="t" style="left:1352.50px;top:843.60px;font-size:13px;line-height:13px;color:#fff;font-weight:bold;transform:scaleX(0.9404);transform-origin:0 0;">13:59:51 loc</div>
<div class="a" style="left:1060px;top:714px;width:364px;height:134px;background:#2b2b2b;"></div>
<svg class="a" style="left:1070px;top:740px" width="60" height="42" viewBox="0 0 60 42"><defs><clipPath id="cl"><circle cx="18.6" cy="25" r="12.1"/><circle cx="31.25" cy="18.65" r="12.75"/><circle cx="44.4" cy="27.5" r="9.6"/><rect x="18.5" y="26" width="26" height="11.1"/></clipPath></defs><g clip-path="url(#cl)"><rect x="0" y="0" width="60" height="42" fill="#9b9b9b"/><polygon points="34.2,20.8 -14.4,-4.1 -50,20 -42.9,50.8" fill="#c2c2c2"/><polygon points="34.2,20.8 64.8,8.8 100,20 89.1,49.9" fill="#dedede"/><polygon points="34.2,20.8 -42.9,50.8 90,60 89.1,49.9" fill="#ffffff"/></g></svg>
<div class="t" style="left:1140.50px;top:740.26px;font-size:16px;line-height:16px;color:#ffffff;font-weight:bold;transform:scaleX(0.9784);transform-origin:0 0;">Screenshot saved</div>
<div class="t" style="left:1140.50px;top:762.33px;font-size:16.5px;line-height:16.5px;color:#a8a8a8;font-weight:normal;transform:scaleX(1.0117);transform-origin:0 0;">The screenshot was added to</div>
<div class="t" style="left:1140.50px;top:784.63px;font-size:16.5px;line-height:16.5px;color:#a8a8a8;font-weight:normal;transform:scaleX(1.0274);transform-origin:0 0;">your OneDrive.</div>
<div class="t" style="left:1140.50px;top:811.37px;font-size:13.5px;line-height:13.5px;color:#a8a8a8;font-weight:normal;transform:scaleX(1.0347);transform-origin:0 0;">OneDrive</div>
</body></html>
